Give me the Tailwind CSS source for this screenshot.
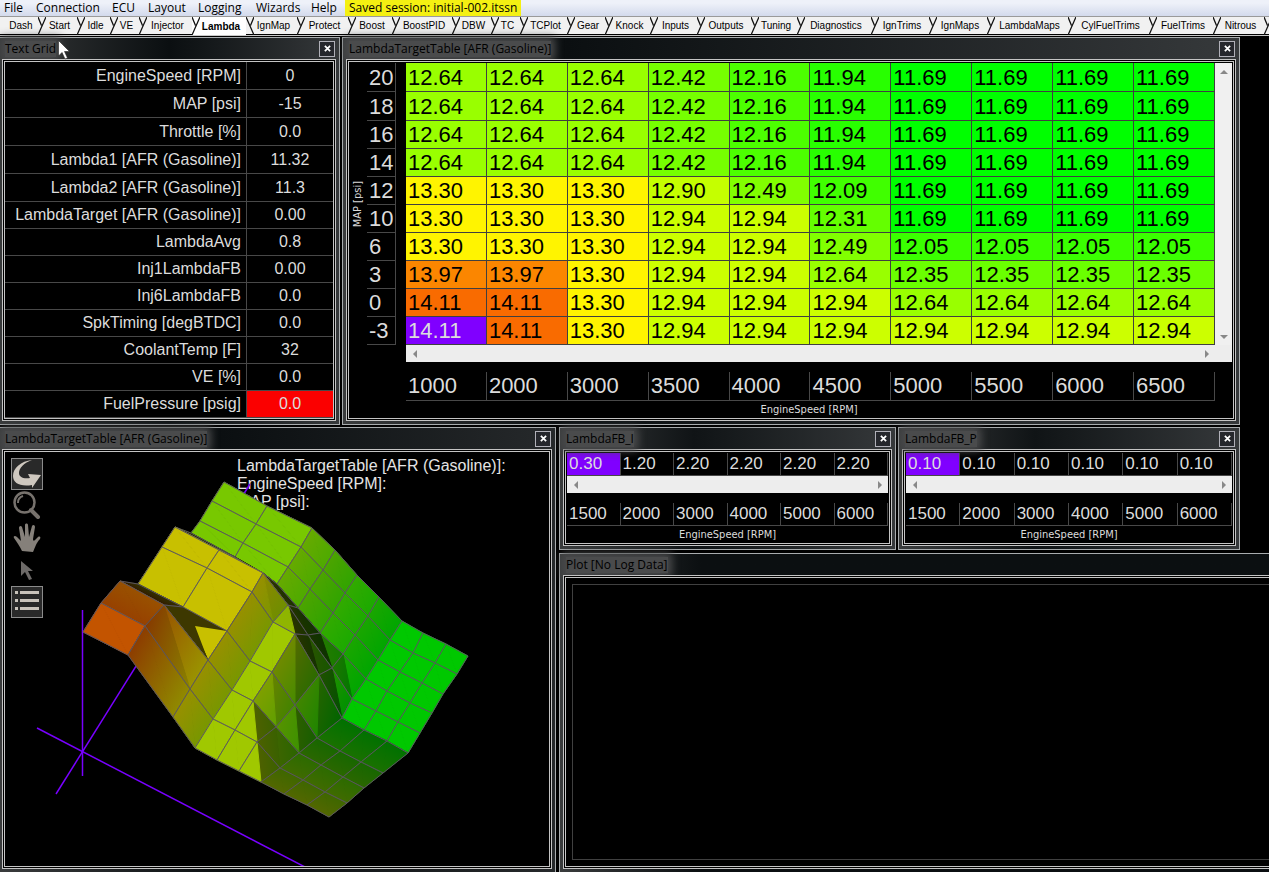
<!DOCTYPE html>
<html lang="en">
<head>
<meta charset="utf-8">
<title>Lambda tuning</title>
<script src="https://cdn.jsdelivr.net/npm/@tailwindcss/browser@4"></script>
</head>
<body class="flex min-h-screen flex-col overflow-x-hidden bg-black font-['Liberation_Sans',Arial,sans-serif] text-[#dcdcdc]">

<header class="font-['Open_Sans','Noto_Sans',sans-serif]">
  <nav class="flex h-4 items-center bg-linear-to-b from-[#eef1f9] from-20% to-[#d3daec] pl-1 text-xs leading-4 text-black" aria-label="Menu">
    <button class="w-8 text-left">File</button>
    <button class="w-[76px] text-left">Connection</button>
    <button class="w-9 text-left">ECU</button>
    <button class="w-[50px] text-left">Layout</button>
    <button class="w-[58px] text-left">Logging</button>
    <button class="w-[55px] text-left">Wizards</button>
    <button class="w-[34px] text-left">Help</button>
    <span class="h-4 bg-[#f4f012] px-1 whitespace-nowrap">Saved session: initial-002.itssn</span>
  </nav>
  <nav id="tabs" class="flex h-5 overflow-hidden border-t border-b border-t-[#9a9a9a] border-b-[#c8c8c8] bg-[#f1f1f1] font-['Liberation_Sans',Arial,sans-serif] text-[10px] text-black" aria-label="Pages"></nav>
</header>

<main class="flex flex-1 flex-col gap-0.5 pt-px">
  <div class="grid grid-cols-[340fr_898fr_27fr] gap-0.5">
    <!-- Text grid -->
    <section class="flex flex-col border border-l-0 border-[#a8acae] bg-linear-to-r from-[#383a3b] via-[#0b0f11] to-[#36393b] pr-[3px] pb-[3px] pl-0.5">
      <div class="flex h-[21px] items-center justify-between pl-[3px] font-['Open_Sans','Noto_Sans',sans-serif] text-xs text-black">
        <h2 class="bg-[#4a4b4c] leading-4 shadow-[0_0_8px_4px_#4a4b4c]">Text Grid</h2>
        <button aria-label="Close Text Grid" class="mr-px grid size-4 place-items-center border border-[#b0b0b8] bg-[#25272c]"><svg class="size-[7px]" viewBox="0 0 8 8"><path d="M1 1l6 6M7 1L1 7" stroke="#fff" stroke-width="2"/></svg></button>
      </div>
      <div class="flex-1 border-3 border-double border-[#c4c4c4] bg-black">
        <table class="w-full table-fixed border-separate border-spacing-0 text-base leading-5">
          <colgroup><col><col class="w-[86px]"></colgroup>
          <tbody id="readouts"></tbody>
        </table>
      </div>
    </section>

    <!-- Lambda target table -->
    <section class="flex flex-col border border-[#a8acae] bg-linear-to-r from-[#3a3c3d] via-[#0b0f11] via-25% to-[#36393b] px-[3px] pb-[3px]">
      <div class="flex h-[21px] items-center justify-between pl-[3px] font-['Open_Sans','Noto_Sans',sans-serif] text-xs text-black">
        <h2 class="bg-[#4a4b4c] leading-4 shadow-[0_0_8px_4px_#4a4b4c]">LambdaTargetTable [AFR (Gasoline)]</h2>
        <button aria-label="Close LambdaTargetTable" class="mr-px grid size-4 place-items-center border border-[#b0b0b8] bg-[#25272c]"><svg class="size-[7px]" viewBox="0 0 8 8"><path d="M1 1l6 6M7 1L1 7" stroke="#fff" stroke-width="2"/></svg></button>
      </div>
      <div class="flex flex-1 border-3 border-double border-[#c4c4c4] bg-black pt-px pr-px">
        <div class="flex h-[282px] w-[18px] shrink-0 items-center justify-center font-['DejaVu_Sans_Condensed','DejaVu_Sans',sans-serif] text-[11px] [writing-mode:vertical-rl]"><span class="rotate-180">MAP [psi]</span></div>
        <div class="flex-1">
          <div class="flex">
            <table class="flex-1 table-fixed border-separate border-spacing-0 text-[22px] leading-7">
              <colgroup><col class="w-[29px]"><col class="w-2.5"></colgroup>
              <tbody id="target"></tbody>
            </table>
            <div class="flex w-[17px] flex-col justify-between bg-[#f0f0f0]">
              <button aria-label="Scroll up" class="grid h-[17px] place-items-center"><svg class="h-1 w-2" viewBox="0 0 8 4"><path d="M0 4L4 0l4 4z" fill="#888"/></svg></button>
              <button aria-label="Scroll down" class="grid h-[17px] place-items-center"><svg class="h-1 w-2" viewBox="0 0 8 4"><path d="M0 0l4 4 4-4z" fill="#888"/></svg></button>
            </div>
          </div>
          <div class="ml-[39px] flex h-[17px] items-center justify-between bg-[#ededed] pr-[17px]">
            <button aria-label="Scroll left" class="grid w-[17px] place-items-center"><svg class="h-2 w-1" viewBox="0 0 4 8"><path d="M4 0L0 4l4 4z" fill="#888"/></svg></button>
            <button aria-label="Scroll right" class="grid w-[17px] place-items-center"><svg class="h-2 w-1" viewBox="0 0 4 8"><path d="M0 0l4 4-4 4z" fill="#888"/></svg></button>
          </div>
          <div class="mt-2.5 mr-[17px] ml-[39px]">
            <table class="w-full table-fixed border-separate border-spacing-0 text-[22px] leading-7"><tbody><tr id="rpm"></tr></tbody></table>
          </div>
          <div class="mr-5 ml-[39px] text-center font-['DejaVu_Sans_Condensed','DejaVu_Sans',sans-serif] text-[11px] leading-[17px]">EngineSpeed [RPM]</div>
        </div>
      </div>
    </section>
  </div>

  <div class="grid flex-1 grid-cols-[556fr_710fr] gap-[3px]">
    <!-- 3D surface -->
    <section class="flex flex-col border border-b-0 border-l-0 border-[#a8acae] bg-linear-to-r from-[#3a3c3d] via-[#0b0f11] via-40% to-[#26292b] pr-[3px] pb-[3px] pl-0.5">
      <div class="flex h-[21px] items-center justify-between pl-[3px] font-['Open_Sans','Noto_Sans',sans-serif] text-xs text-black">
        <h2 class="bg-[#4a4b4c] leading-4 shadow-[0_0_8px_4px_#4a4b4c]">LambdaTargetTable [AFR (Gasoline)]</h2>
        <button aria-label="Close surface view" class="mr-px grid size-4 place-items-center border border-[#b0b0b8] bg-[#25272c]"><svg class="size-[7px]" viewBox="0 0 8 8"><path d="M1 1l6 6M7 1L1 7" stroke="#fff" stroke-width="2"/></svg></button>
      </div>
      <div class="relative flex-1 overflow-hidden border-3 border-double border-[#c4c4c4] bg-black">
        <div class="pt-[5px] pl-[232px] text-base leading-[18px] text-[#e4e4e4]">
          <p>LambdaTargetTable [AFR (Gasoline)]:</p>
          <p>EngineSpeed [RPM]:</p>
          <p>MAP [psi]:</p>
        </div>
        <svg id="surface" class="absolute top-0 left-0" width="545" height="415" viewBox="5 452 545 415" aria-label="Lambda target surface">
          <g stroke="#7800ff" stroke-width="1.5" fill="none">
            <path d="M82.500 610V776"/><path d="M37 728L305 867"/><path d="M56 794L250 484"/>
          </g>
        </svg>
        <div class="absolute top-1.5 left-1.5 flex w-8 flex-col">
          <button aria-label="Rotate" class="size-8 border border-[#8b8b8b] bg-[#292929]"><svg class="size-full" viewBox="0 0 30 30"><path d="M20 1C9 2 1 9 1 17c0 7 7 11 19 9v3l9-13-13-1 2 4C11 20 7 18 7 14c0-5 5-10 13-13z" fill="#cfc8bf"/></svg></button>
          <button aria-label="Zoom" class="size-8"><svg class="size-full" viewBox="0 0 32 32" fill="none"><path d="M20 20l7 7" stroke="#77726d" stroke-width="4" stroke-linecap="round"/><circle cx="13.500" cy="12.500" r="10" stroke="#77726d" stroke-width="2.500"/><path d="M7 13a7 7 0 0 1 5-7" stroke="#77726d" stroke-width="2"/></svg></button>
          <button aria-label="Pan" class="size-8"><svg class="size-full" viewBox="0 0 32 32"><path d="M11 29c-2-4-5-9-8-13-1-2 1-3 3-1l4 4L8 6c0-2 2-3 3-1l3 10V3c0-2 3-2 3 0l1 12 3-11c1-2 3-1 3 1l-2 12c0 2 1 2 2 1l3-3c2-1 3 0 2 2-4 4-5 9-7 13z" fill="#85807a"/></svg></button>
          <button aria-label="Select" class="size-8"><svg class="size-full" viewBox="0 0 32 32"><path d="M10 7v15l4-4 4 8 3-1-4-8h5z" fill="#6d6a68"/></svg></button>
          <button aria-label="List" class="size-8 border border-[#8b8b8b] bg-[#292929]"><svg class="size-full" viewBox="0 0 30 30" fill="#c9c3bb"><path d="M3 4h3v3H3zM8 4h19v3H8zM3 12h3v3H3zM8 12h19v3H8zM3 20h3v3H3zM8 20h19v3H8z"/></svg></button>
        </div>
      </div>
    </section>

    <div class="flex flex-col gap-[3px]">
      <div class="grid grid-cols-[337fr_342fr_27fr] gap-0.5">
        <section class="border border-[#a8acae] bg-linear-to-r from-[#3a3c3d] via-[#101416] via-40% to-[#36393b] px-[3px] pb-[3px]">
          <div class="flex h-[21px] items-center justify-between pl-[3px] font-['Open_Sans','Noto_Sans',sans-serif] text-xs text-black">
            <h2 class="bg-[#4a4b4c] leading-4 shadow-[0_0_8px_4px_#4a4b4c]">LambdaFB_I</h2>
            <button aria-label="Close LambdaFB_I" class="mr-px grid size-4 place-items-center border border-[#b0b0b8] bg-[#25272c]"><svg class="size-[7px]" viewBox="0 0 8 8"><path d="M1 1l6 6M7 1L1 7" stroke="#fff" stroke-width="2"/></svg></button>
          </div>
          <div class="border-3 border-double border-[#c4c4c4] bg-black">
            <div class="px-px pt-px">
              <table class="w-full table-fixed border-separate border-spacing-0 text-[17px] leading-[22px]"><tbody><tr id="fbi"></tr></tbody></table>
              <div class="flex h-[17px] items-center justify-between bg-[#ededed]">
                <button aria-label="Scroll left" class="grid w-[17px] place-items-center"><svg class="h-2 w-1" viewBox="0 0 4 8"><path d="M4 0L0 4l4 4z" fill="#888"/></svg></button>
                <button aria-label="Scroll right" class="grid w-[17px] place-items-center"><svg class="h-2 w-1" viewBox="0 0 4 8"><path d="M0 0l4 4-4 4z" fill="#888"/></svg></button>
              </div>
              <table class="mt-2.5 w-full table-fixed border-separate border-spacing-0 text-[17px] leading-[22px]"><tbody><tr id="fbirpm"></tr></tbody></table>
            </div>
            <div class="text-center font-['DejaVu_Sans_Condensed','DejaVu_Sans',sans-serif] text-[11px] leading-[17px]">EngineSpeed [RPM]</div>
          </div>
        </section>
        <section class="border border-[#a8acae] bg-linear-to-r from-[#3a3c3d] via-[#101416] via-40% to-[#36393b] px-[3px] pb-[3px]">
          <div class="flex h-[21px] items-center justify-between pl-[3px] font-['Open_Sans','Noto_Sans',sans-serif] text-xs text-black">
            <h2 class="bg-[#4a4b4c] leading-4 shadow-[0_0_8px_4px_#4a4b4c]">LambdaFB_P</h2>
            <button aria-label="Close LambdaFB_P" class="mr-px grid size-4 place-items-center border border-[#b0b0b8] bg-[#25272c]"><svg class="size-[7px]" viewBox="0 0 8 8"><path d="M1 1l6 6M7 1L1 7" stroke="#fff" stroke-width="2"/></svg></button>
          </div>
          <div class="border-3 border-double border-[#c4c4c4] bg-black">
            <div class="px-px pt-px">
              <table class="w-full table-fixed border-separate border-spacing-0 text-[17px] leading-[22px]"><tbody><tr id="fbp"></tr></tbody></table>
              <div class="flex h-[17px] items-center justify-between bg-[#ededed]">
                <button aria-label="Scroll left" class="grid w-[17px] place-items-center"><svg class="h-2 w-1" viewBox="0 0 4 8"><path d="M4 0L0 4l4 4z" fill="#888"/></svg></button>
                <button aria-label="Scroll right" class="grid w-[17px] place-items-center"><svg class="h-2 w-1" viewBox="0 0 4 8"><path d="M0 0l4 4-4 4z" fill="#888"/></svg></button>
              </div>
              <table class="mt-2.5 w-full table-fixed border-separate border-spacing-0 text-[17px] leading-[22px]"><tbody><tr id="fbprpm"></tr></tbody></table>
            </div>
            <div class="text-center font-['DejaVu_Sans_Condensed','DejaVu_Sans',sans-serif] text-[11px] leading-[17px]">EngineSpeed [RPM]</div>
          </div>
        </section>
      </div>

      <!-- Plot -->
      <section class="flex flex-1 flex-col border border-r-0 border-b-0 border-[#a8acae] bg-linear-to-r from-[#3a3c3d] via-[#0b0f11] via-20% to-[#0b0f11] pb-[3px] pl-[3px]">
        <div class="flex h-[21px] items-center pl-[3px] font-['Open_Sans','Noto_Sans',sans-serif] text-xs text-black">
          <h2 class="bg-[#4a4b4c] leading-4 shadow-[0_0_8px_4px_#4a4b4c]">Plot [No Log Data]</h2>
        </div>
        <div class="flex flex-1 flex-col border-3 border-r-0 border-double border-[#c4c4c4] bg-black py-1.5 pl-1.5">
          <div class="flex-1 border border-r-0 border-[#404040]"></div>
        </div>
      </section>
    </div>
  </div>
</main>

<svg class="pointer-events-none absolute top-10 left-[58px] h-5 w-3" viewBox="0 0 12 20"><path d="M.5.5v15.500l3.500-3.500 3 6.500 2.500-1-3-6.500h5z" fill="#fff" stroke="#222" stroke-width=".6"/></svg>

<script>
const $ = id => document.getElementById(id);

// Page tabs: label and width
const tabs = [['Dash',38],['Start',39],['Idle',33],['VE',29],['Injector',53],['Lambda',54],['IgnMap',51],['Protect',51],['Boost',44],['BoostPID',60],['DBW',39],['TC',29],['TCPlot',47],['Gear',38],['Knock',45],['Inputs',47],['Outputs',54],['Tuning',46],['Diagnostics',74],['IgnTrims',58],['IgnMaps',58],['LambdaMaps',81],['CylFuelTrims',81],['FuelTrims',64],['Nitrous',51],['',20]];
const active = 5;
$('tabs').innerHTML = tabs.map(([label, w], i) => {
  const edge = i === active ? '<path d="M0 0l8 17M8 0L4.500 8"/>' : '<path d="M8 0L0 17M0 0l3.500 8"/>';
  const cls = i === active ? 'relative shrink-0 bg-white pl-1 font-bold leading-[17px]' : 'relative shrink-0 border-b border-black pl-1 leading-[17px]';
  return `<button class="${cls}" style="width:${w}px">${label}<svg class="absolute top-0 -right-2 z-10 h-[18px] w-2" viewBox="0 0 8 17" preserveAspectRatio="none" fill="none" stroke="#111" stroke-width="1.300">${edge}</svg></button>`;
}).join('');

// Live readouts
const readouts = [['EngineSpeed [RPM]','0'],['MAP [psi]','-15'],['Throttle [%]','0.0'],['Lambda1 [AFR (Gasoline)]','11.32'],['Lambda2 [AFR (Gasoline)]','11.3'],['LambdaTarget [AFR (Gasoline)]','0.00'],['LambdaAvg','0.8'],['Inj1LambdaFB','0.00'],['Inj6LambdaFB','0.0'],['SpkTiming [degBTDC]','0.0'],['CoolantTemp [F]','32'],['VE [%]','0.0'],['FuelPressure [psig]','0.0']];
$('readouts').innerHTML = readouts.map(([n, v], i) =>
  `<tr class="${i < 5 ? 'h-7' : 'h-[27px]'}"><th scope="row" class="border-r border-b border-[#484848] pr-[5px] text-right font-normal whitespace-nowrap">${n}</th><td class="border-b border-[#484848] text-center ${n.startsWith('Fuel') ? 'bg-[#fb0000]' : ''}">${v}</td></tr>`).join('');

// Target AFR, top row is the highest manifold pressure
const map = [20,18,16,14,12,10,6,3,0,-3];
const rpm = [1000,2000,3000,3500,4000,4500,5000,5500,6000,6500];
const upper = ['12.64','12.64','12.64','12.42','12.16','11.94','11.69','11.69','11.69','11.69'];
const afr = [upper, upper, upper, upper,
  ['13.30','13.30','13.30','12.90','12.49','12.09','11.69','11.69','11.69','11.69'],
  ['13.30','13.30','13.30','12.94','12.94','12.31','11.69','11.69','11.69','11.69'],
  ['13.30','13.30','13.30','12.94','12.94','12.49','12.05','12.05','12.05','12.05'],
  ['13.97','13.97','13.30','12.94','12.94','12.64','12.35','12.35','12.35','12.35'],
  ['14.11','14.11','13.30','12.94','12.94','12.94','12.64','12.64','12.64','12.64'],
  ['14.11','14.11','13.30','12.94','12.94','12.94','12.94','12.94','12.94','12.94']];
const ramp = [[11.69,0,255],[12.64,153,255],[12.94,204,255],[13.3,255,244],[13.97,251,134],[14.11,249,107]];
function color(v, k = 1) {
  let i = 1;
  while (i < ramp.length - 1 && v > ramp[i][0]) i++;
  const [a, b] = [ramp[i - 1], ramp[i]], t = (v - a[0]) / (b[0] - a[0]);
  return `rgb(${Math.round(k * (a[1] + t * (b[1] - a[1])))},${Math.round(k * (a[2] + t * (b[2] - a[2])))},0)`;
}
$('target').innerHTML = afr.map((row, r) =>
  `<tr class="${r < 2 ? 'h-[29px]' : 'h-7'}"><th scope="row" class="border-r border-b border-[#484848] p-0 pl-0.5 text-left font-normal leading-[27px]">${map[r]}</th><td class="p-0"></td>` +
  row.map((v, c) => r === 9 && c === 0
    ? `<td class="border-r border-b border-[#404040] bg-[#8000ff] p-0 pl-0.5 leading-[27px]">${v}</td>`
    : `<td class="border-r border-b border-[#404040] p-0 pl-0.5 leading-[27px] text-black" style="background:${color(+v)}">${v}</td>`).join('') + '</tr>').join('');

const axis = (list) => list.map(v => `<th scope="col" class="border-r border-b border-[#484848] p-0 pl-0.5 text-left font-normal">${v}</th>`).join('');
$('rpm').innerHTML = axis(rpm);
const fbRpm = [1500,2000,3000,4000,5000,6000];
$('fbirpm').innerHTML = axis(fbRpm);
$('fbprpm').innerHTML = axis(fbRpm);
const fb = list => list.map((v, i) => `<td class="border-r border-b border-[#484848] p-0 pl-0.5 ${i ? '' : 'bg-[#8000ff]'}">${v}</td>`).join('');
$('fbi').innerHTML = fb(['0.30','1.20','2.20','2.20','2.20','2.20']);
$('fbp').innerHTML = fb(['0.10','0.10','0.10','0.10','0.10','0.10']);

// Projected mesh vertices, same row order as the table
const mesh = [
  [[224,482],[267,506],[312,528],[335,550],[357,575],[379,597],[402,621],[423,633],[446,644],[468,656]],
  [[212,501],[256,524],[301,547],[323,570],[345,593],[368,616],[390,640],[413,653],[435,663],[457,674]],
  [[200,521],[243,543],[288,567],[310,589],[333,613],[355,635],[378,660],[400,672],[422,683],[443,694]],
  [[191,533],[235,557],[277,584],[298,608],[320,633],[343,654],[366,679],[387,691],[410,703],[432,713]],
  [[175,527],[219,550],[263,573],[288,605],[308,635],[332,668],[352,699],[376,711],[398,722],[420,733]],
  [[162,547],[207,568],[252,592],[273,622],[295,634],[319,675],[342,718],[364,730],[387,741],[408,753]],
  [[138,584],[183,607],[227,631],[250,661],[272,672],[295,705],[317,738],[340,751],[361,762],[383,773]],
  [[120,581],[164,605],[208,660],[232,690],[253,701],[276,727],[299,753],[321,765],[343,777],[364,788]],
  [[101,603],[145,626],[190,689],[213,719],[235,730],[257,742],[280,768],[303,780],[325,792],[347,803]],
  [[83,632],[128,655],[173,717],[195,748],[217,760],[239,771],[261,782],[284,794],[307,805],[329,817]]];
let defs = '', faces = '', n = 0;
function face(p, drop, rise) {
  const u = Math.max(0, .27 * drop), v = Math.max(0, 3.8 * rise);
  const k = Math.max(.2, .785 - Math.max(u, v) - .15 * Math.min(u, v));
  const [[x0, y0, a], [x1, y1, b], [x2, y2, c]] = p;
  const det = (x1 - x0) * (y2 - y0) - (x2 - x0) * (y1 - y0);
  const gx = ((b - a) * (y2 - y0) - (c - a) * (y1 - y0)) / det;
  const gy = ((c - a) * (x1 - x0) - (b - a) * (x2 - x0)) / det;
  const g2 = gx * gx + gy * gy, lo = Math.min(a, b, c), hi = Math.max(a, b, c);
  let fill = color(a, k);
  if (hi - lo > .01) {
    const s = (lo - a) / g2, e = (hi - a) / g2;
    defs += `<linearGradient id="g${n}" gradientUnits="userSpaceOnUse" x1="${x0 + gx * s}" y1="${y0 + gy * s}" x2="${x0 + gx * e}" y2="${y0 + gy * e}"><stop stop-color="${color(lo, k)}"/><stop offset="1" stop-color="${color(hi, k)}"/></linearGradient>`;
    fill = `url(#g${n++})`;
  }
  faces += `<path d="M${x0} ${y0}L${x1} ${y1}L${x2} ${y2}z" fill="${fill}" stroke="${fill}"/>`;
}
for (let r = 0; r < 9; r++) for (let c = 0; c < 9; c++) {
  const P = (i, j) => [...mesh[i][j], +afr[i][j]];
  const bl = P(r, c), br = P(r, c + 1), fl = P(r + 1, c), fr = P(r + 1, c + 1);
  const dr = (rpm[c + 1] - rpm[c]) / 1000, dm = map[r] - map[r + 1];
  face([bl, br, fr], (bl[2] - br[2]) / dr, (fr[2] - br[2]) / dm);
  face([bl, fl, fr], (fl[2] - fr[2]) / dr, (fl[2] - bl[2]) / dm);
  // Shadowed fold under the 13.30 plateau
  if (r === 6 && c === 1) faces += '<path d="M164 605L183 607L227 631L195 626L208 660z" fill="#3d3800"/>';
  faces += `<path d="M${bl[0]} ${bl[1]}L${br[0]} ${br[1]}L${fr[0]} ${fr[1]}L${fl[0]} ${fl[1]}z" fill="none" stroke="#5a5560" stroke-width="1"/>`;
}
$('surface').insertAdjacentHTML('beforeend', `<defs>${defs}</defs>${faces}`);
</script>
</body>
</html>
